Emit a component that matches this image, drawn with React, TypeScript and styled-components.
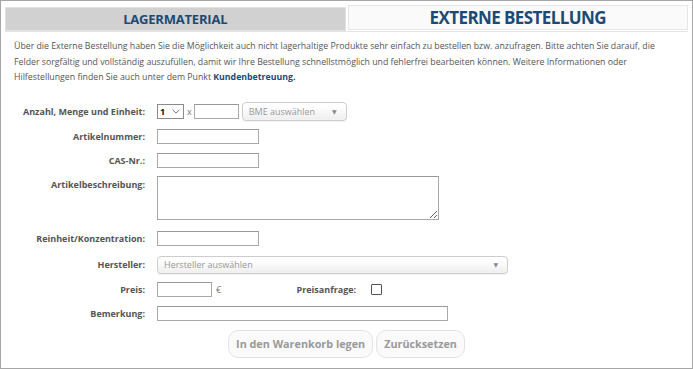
import React from 'react';
import styled, { createGlobalStyle } from 'styled-components';

const GlobalStyle = createGlobalStyle`
  html, body {
    margin: 0;
    padding: 0;
    background: #fff;
  }
  body {
    font-family: "Open Sans", "DejaVu Sans", sans-serif;
    color: #555;
  }
  * {
    box-sizing: border-box;
  }
`;

const Frame = styled.div`
  width: 693px;
  height: 369px;
  border: 1px solid #a6a6a6;
  overflow: hidden;
`;

const TabBar = styled.div`
  display: flex;
  gap: 2px;
  margin: 4px 4px 0 4px;
  border-bottom: 1px solid #e4e4e4;
`;

const Tab = styled.div<{ $active?: boolean }>`
  flex: 1;
  display: flex;
  align-items: center;
  justify-content: center;
  height: ${(p) => (p.$active ? '25px' : '24px')};
  margin-top: ${(p) => (p.$active ? '0' : '2px')};
  background: ${(p) => (p.$active ? '#fafafa' : '#d1d1d1')};
  border: 1px solid ${(p) => (p.$active ? '#e6e6e6' : '#e2e2e2')};
  color: #1c4a74;
  font-weight: 700;
  font-size: ${(p) => (p.$active ? '17px' : '13px')};
  letter-spacing: ${(p) => (p.$active ? '-0.6px' : '-0.2px')};
`;

const Intro = styled.p`
  margin: 7px 0 0 0;
  padding: 0 13px;
  font-size: 8.75px;
  line-height: 15.5px;
  color: #555;
`;

const Link = styled.a`
  color: #1c4a74;
  font-weight: 700;
  text-decoration: none;
`;

const Form = styled.div`
  display: flex;
  flex-direction: column;
`;

const Row = styled.div<{ $h: number; $mt: number; $top?: boolean }>`
  display: flex;
  align-items: ${(p) => (p.$top ? 'flex-start' : 'center')};
  height: ${(p) => p.$h}px;
  margin-top: ${(p) => p.$mt}px;
`;

const Label = styled.label<{ $top?: boolean }>`
  width: 144px;
  flex: none;
  text-align: right;
  font-size: 9px;
  font-weight: 700;
  color: #555;
  padding-top: ${(p) => (p.$top ? '2px' : '0')};
  margin-right: 12px;
`;

const Field = styled.div`
  display: flex;
  align-items: center;
  gap: 3px;
`;

const Input = styled.input<{ $w: number }>`
  width: ${(p) => p.$w}px;
  height: 15px;
  border: 1px solid #a9a9a9;
  border-top-color: #999;
  background: #fff;
  padding: 0 3px;
  font-family: inherit;
  font-size: 9px;
  outline: none;
`;

const TextArea = styled.textarea`
  width: 282px;
  height: 44px;
  border: 1px solid #a9a9a9;
  border-top-color: #999;
  font-family: inherit;
  font-size: 9px;
  padding: 2px 3px;
  outline: none;
  resize: both;
`;

const NativeSelect = styled.div`
  display: flex;
  align-items: center;
  justify-content: space-between;
  width: 27px;
  height: 15px;
  border: 1px solid #8a8a8a;
  padding: 0 3px 0 2px;
  font-size: 9px;
  font-weight: 700;
  color: #111;
  background: #fff;
`;

const Times = styled.span`
  font-size: 9px;
  color: #777;
  margin-right: -1px;
`;

const FancySelect = styled.div<{ $w: number; $h: number }>`
  display: flex;
  align-items: center;
  justify-content: space-between;
  width: ${(p) => p.$w}px;
  height: ${(p) => p.$h}px;
  padding: 0 9px 0 6px;
  border: 1px solid #cdcdcd;
  border-radius: 4px;
  background: linear-gradient(#ffffff 20%, #eeeeee);
  box-shadow: 0 0 2px #fff inset, 0 1px 1px rgba(0, 0, 0, 0.06);
  color: #999;
  font-size: 9px;
`;

const Arrow = styled.span`
  font-size: 6px;
  color: #888;
`;

const Euro = styled.span`
  font-size: 9px;
  color: #777;
  margin-left: 1px;
`;

const SideLabel = styled.span`
  width: 132px;
  text-align: right;
  font-size: 9px;
  font-weight: 700;
  color: #555;
  margin-right: 12px;
`;

const Checkbox = styled.span`
  width: 11px;
  height: 11px;
  border: 1px solid #555;
  border-radius: 1px;
  background: #fff;
`;

const Buttons = styled.div`
  display: flex;
  justify-content: center;
  gap: 3px;
  margin-top: 4px;
`;

const Button = styled.button`
  height: 28px;
  padding: 0 7px;
  border: 1px solid #e3e3e3;
  border-radius: 10px;
  background: #fafafa;
  color: #999;
  font-family: inherit;
  font-size: 10.8px;
  font-weight: 700;
`;

const ChevronDown = () => (
  <svg width="8" height="5" viewBox="0 0 8 5">
    <path d="M0.5 0.8 L4 4 L7.5 0.8" fill="none" stroke="#666" strokeWidth="0.9" />
  </svg>
);

const App: React.FC = () => {
  return (
    <Frame>
      <GlobalStyle />
      <TabBar>
        <Tab>LAGERMATERIAL</Tab>
        <Tab $active>EXTERNE BESTELLUNG</Tab>
      </TabBar>
      <Intro>
        Über die Externe Bestellung haben Sie die Möglichkeit auch nicht lagerhaltige Produkte sehr einfach zu
        bestellen bzw. anzufragen. Bitte achten Sie darauf, die Felder sorgfältig und vollständig auszufüllen, damit
        wir Ihre Bestellung schnellstmöglich und fehlerfrei bearbeiten können. Weitere Informationen oder
        Hilfestellungen finden Sie auch unter dem Punkt <Link>Kundenbetreuung.</Link>
      </Intro>
      <Form>
        <Row $h={22} $mt={15}>
          <Label>Anzahl, Menge und Einheit:</Label>
          <Field>
            <NativeSelect>
              1 <ChevronDown />
            </NativeSelect>
            <Times>x</Times>
            <Input $w={45} />
            <FancySelect $w={105} $h={19}>
              BME auswählen <Arrow>▼</Arrow>
            </FancySelect>
          </Field>
        </Row>
        <Row $h={24} $mt={2}>
          <Label>Artikelnummer:</Label>
          <Input $w={102} />
        </Row>
        <Row $h={24} $mt={0}>
          <Label>CAS-Nr.:</Label>
          <Input $w={102} />
        </Row>
        <Row $h={44} $mt={3} $top>
          <Label $top>Artikelbeschreibung:</Label>
          <TextArea />
        </Row>
        <Row $h={22} $mt={8}>
          <Label>Reinheit/Konzentration:</Label>
          <Input $w={102} />
        </Row>
        <Row $h={24} $mt={3}>
          <Label>Hersteller:</Label>
          <FancySelect $w={351} $h={18}>
            Hersteller auswählen <Arrow>▼</Arrow>
          </FancySelect>
        </Row>
        <Row $h={24} $mt={1}>
          <Label>Preis:</Label>
          <Field>
            <Input $w={55} />
            <Euro>€</Euro>
            <SideLabel>Preisanfrage:</SideLabel>
            <Checkbox />
          </Field>
        </Row>
        <Row $h={24} $mt={0}>
          <Label>Bemerkung:</Label>
          <Input $w={291} />
        </Row>
        <Buttons>
          <Button>In den Warenkorb legen</Button>
          <Button>Zurücksetzen</Button>
        </Buttons>
      </Form>
    </Frame>
  );
};

export default App;
